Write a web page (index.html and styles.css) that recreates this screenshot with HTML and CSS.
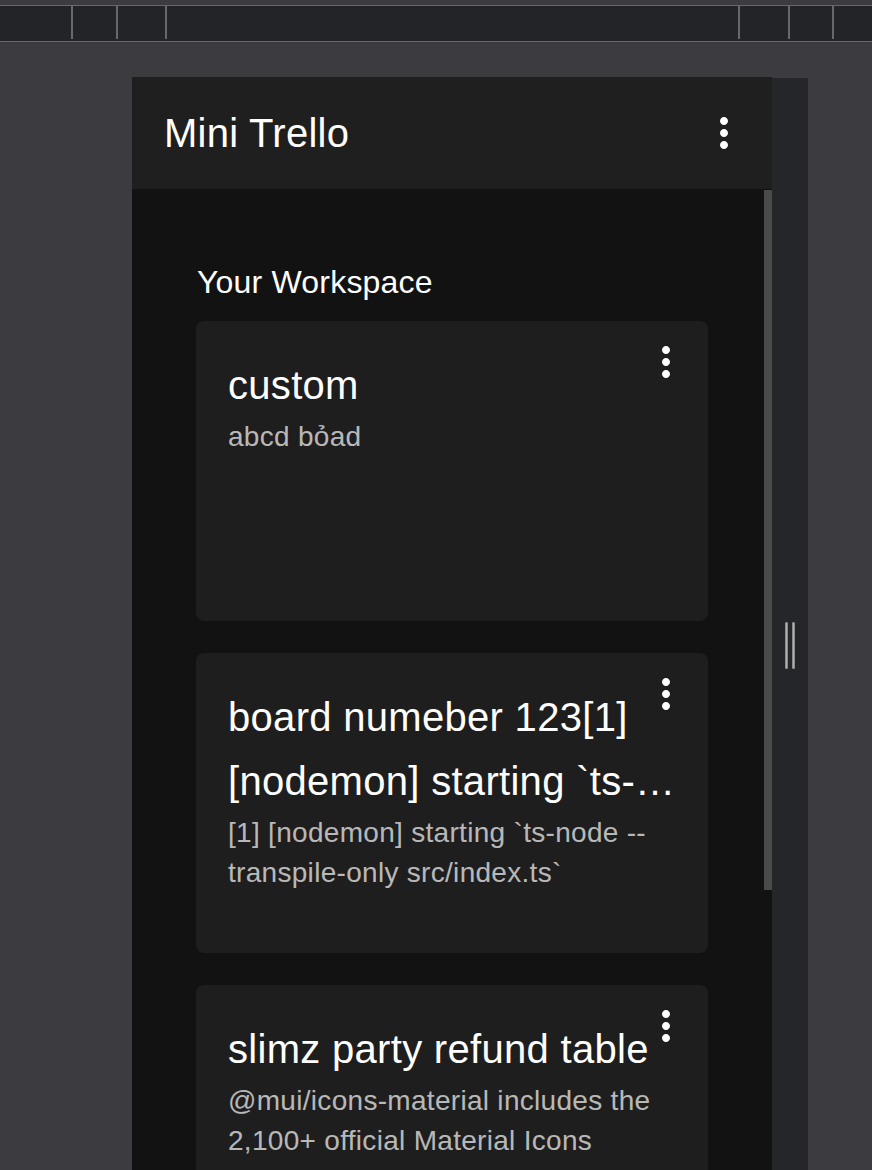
FILE: index.html
```html
<!DOCTYPE html>
<html lang="en">
  <head>
    <meta charset="UTF-8" />
    <meta name="viewport" content="width=device-width, initial-scale=1.0" />
    <title>Mini Trello</title>
    <link rel="stylesheet" href="styles.css">
  </head>
  <body>
    <div class="toolbar">
      <div class="slot w71"></div>
      <div class="divider"></div>
      <div class="slot w43"></div>
      <div class="divider"></div>
      <div class="slot w47"></div>
      <div class="divider"></div>
      <div class="slot grow"></div>
      <div class="divider"></div>
      <div class="slot w48"></div>
      <div class="divider"></div>
      <div class="slot w42"></div>
      <div class="divider"></div>
      <div class="slot w38"></div>
    </div>

    <div class="stage">
      <div class="device">
        <header class="appbar">
          <span class="app-title">Mini Trello</span>
          <svg class="more" viewBox="0 0 24 24" width="48" height="48">
            <path d="M12 8c1.1 0 2-.9 2-2s-.9-2-2-2-2 .9-2 2 .9 2 2 2zm0 2c-1.1 0-2 .9-2 2s.9 2 2 2 2-.9 2-2-.9-2-2-2zm0 6c-1.1 0-2 .9-2 2s.9 2 2 2 2-.9 2-2-.9-2-2-2z"/>
          </svg>
        </header>

        <div class="viewport">
          <main class="content">
            <div class="section-title">Your Workspace</div>

            <div class="card">
              <div class="card-title">custom</div>
              <div class="card-desc">abcd bỏad</div>
              <svg class="more card-more" viewBox="0 0 24 24" width="48" height="48">
                <path d="M12 8c1.1 0 2-.9 2-2s-.9-2-2-2-2 .9-2 2 .9 2 2 2zm0 2c-1.1 0-2 .9-2 2s.9 2 2 2 2-.9 2-2-.9-2-2-2zm0 6c-1.1 0-2 .9-2 2s.9 2 2 2 2-.9 2-2-.9-2-2-2z"/>
              </svg>
            </div>

            <div class="card">
              <div class="card-title">board numeber 123[1] [nodemon] starting `ts-node --transpile-only src/index.ts`</div>
              <div class="card-desc">[1] [nodemon] starting `ts-node --transpile-only src/index.ts`</div>
              <svg class="more card-more" viewBox="0 0 24 24" width="48" height="48">
                <path d="M12 8c1.1 0 2-.9 2-2s-.9-2-2-2-2 .9-2 2 .9 2 2 2zm0 2c-1.1 0-2 .9-2 2s.9 2 2 2 2-.9 2-2-.9-2-2-2zm0 6c-1.1 0-2 .9-2 2s.9 2 2 2 2-.9 2-2-.9-2-2-2z"/>
              </svg>
            </div>

            <div class="card">
              <div class="card-title">slimz party refund table</div>
              <div class="card-desc">@mui/icons-material includes the 2,100+ official Material Icons converted to SvgIcon components.</div>
              <svg class="more card-more" viewBox="0 0 24 24" width="48" height="48">
                <path d="M12 8c1.1 0 2-.9 2-2s-.9-2-2-2-2 .9-2 2 .9 2 2 2zm0 2c-1.1 0-2 .9-2 2s.9 2 2 2 2-.9 2-2-.9-2-2-2zm0 6c-1.1 0-2 .9-2 2s.9 2 2 2 2-.9 2-2-.9-2-2-2z"/>
              </svg>
            </div>
          </main>
          <div class="scroll-track">
            <div class="scroll-thumb"></div>
          </div>
        </div>
      </div>

      <div class="rail">
        <div class="grip">
          <span></span>
          <span></span>
        </div>
      </div>
    </div>
  </body>
</html>
```

FILE: styles.css
```css
html,
body {
  height: 100%;
}

body {
  margin: 0;
  overflow: hidden;
  font-family: "Liberation Sans", Arial, sans-serif;
  background-color: #3c3b40;
  color: #fff;
}

/* devtools strip */
.toolbar {
  display: flex;
  align-items: flex-start;
  margin-top: 5px;
  height: 35px;
  background-color: #232428;
  border-top: 1px solid #68686c;
  border-bottom: 1px solid #68686c;
}

.slot {
  flex: none;
}

.w71 { width: 71px; }
.w43 { width: 43px; }
.w47 { width: 47px; }
.w48 { width: 48px; }
.w42 { width: 42px; }
.w38 { width: 38px; }

.slot.grow {
  flex: 1;
}

.divider {
  flex: none;
  width: 2px;
  height: 33px;
  background-color: #68686c;
}

.stage {
  display: flex;
  align-items: flex-start;
  padding-top: 35px;
  padding-left: 132px;
}

/* emulated phone */
.device {
  width: 640px;
  height: 1200px;
  background-color: #121212;
}

.appbar {
  display: flex;
  align-items: center;
  justify-content: space-between;
  height: 112px;
  padding: 0 24px 0 32px;
  background-color: #1f1f1f;
}

.app-title {
  font-size: 40px;
  line-height: 64px;
  letter-spacing: 0.27px;
}

.more {
  display: block;
  fill: #fff;
}

.viewport {
  display: flex;
}

.content {
  flex: 1;
  padding: 69px 0 0 64px;
}

.section-title {
  font-size: 32px;
  line-height: 48px;
  letter-spacing: 0.2px;
  margin-left: 1px;
  margin-bottom: 15px;
}

.card {
  position: relative;
  box-sizing: border-box;
  width: 512px;
  height: 300px;
  margin-bottom: 32px;
  padding: 32px;
  border-radius: 8px;
  background-color: #1e1e1e;
  overflow: hidden;
}

.card-title {
  font-size: 40px;
  line-height: 64px;
  letter-spacing: 0.3px;
  display: -webkit-box;
  -webkit-line-clamp: 2;
  -webkit-box-orient: vertical;
  overflow: hidden;
}

.card-desc {
  font-size: 28px;
  line-height: 40px;
  letter-spacing: 0.3px;
  color: rgba(255, 255, 255, 0.7);
}

.card-more {
  position: absolute;
  top: 17px;
  right: 18px;
}

.scroll-track {
  width: 8px;
  padding-top: 1px;
}

.scroll-thumb {
  height: 700px;
  background-color: #4a4a4a;
}

/* side resize rail */
.rail {
  width: 36px;
  height: 1200px;
  margin-top: 1px;
  background-color: #25262a;
}

.grip {
  display: flex;
  justify-content: center;
  gap: 4px;
  margin-top: 544px;
}

.grip span {
  box-sizing: border-box;
  width: 3px;
  height: 47px;
  border-radius: 1px;
  background-color: #b0b0b0;
  border: 1px solid #8a8a8a;
}
```
